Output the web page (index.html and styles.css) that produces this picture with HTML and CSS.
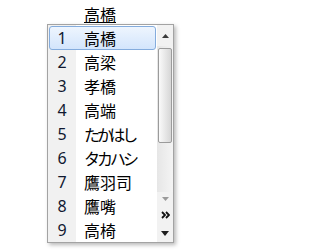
FILE: index.html
```html
<!DOCTYPE html>
<html lang="ja">
<head>
<meta charset="utf-8">
<link rel="stylesheet" href="styles.css">
</head>
<body>
<div class="page">
  <div class="comp"><span class="comp-text">高橋</span></div>
  <div class="cand">
    <ul class="list">
      <li class="row sel"><span class="num">1</span><span class="word">高橋</span></li>
      <li class="row"><span class="num">2</span><span class="word">高梁</span></li>
      <li class="row"><span class="num">3</span><span class="word">孝橋</span></li>
      <li class="row"><span class="num">4</span><span class="word">高端</span></li>
      <li class="row"><span class="num">5</span><span class="word kana">たかはし</span></li>
      <li class="row"><span class="num">6</span><span class="word kana">タカハシ</span></li>
      <li class="row"><span class="num">7</span><span class="word">鷹羽司</span></li>
      <li class="row"><span class="num">8</span><span class="word">鷹嘴</span></li>
      <li class="row"><span class="num">9</span><span class="word">高椅</span></li>
    </ul>
    <div class="side">
      <div class="scroll">
        <div class="sbtn up"><svg width="7" height="4" viewBox="0 0 7 4"><polygon points="0,4 3.5,0 7,4" fill="#3a3a3a"/></svg></div>
        <div class="track">
          <div class="thumb"></div>
        </div>
        <div class="sbtn down"><svg width="7" height="4" viewBox="0 0 7 4"><polygon points="0,0 7,0 3.5,4" fill="#9a9a9a"/></svg></div>
      </div>
      <div class="ext">
        <svg width="9" height="8" viewBox="0 0 9 8"><polyline points="1,1 4,4 1,7" fill="none" stroke="#111" stroke-width="1.8"/><polyline points="5,1 8,4 5,7" fill="none" stroke="#111" stroke-width="1.8"/></svg>
      </div>
      <div class="more">
        <svg width="8" height="5" viewBox="0 0 8 5"><polygon points="0,0 8,0 4,5" fill="#1e1e1e"/></svg>
      </div>
    </div>
  </div>
</div>
</body>
</html>
```
FILE: styles.css
```css
html, body {
  margin: 0;
  padding: 0;
  background: #fff;
}
.page {
  width: 220px;
  height: 250px;
  padding-top: 6px;
  box-sizing: border-box;
  font-family: "Noto Sans CJK JP", "Noto Sans", sans-serif;
}
.comp {
  margin-left: 84px;
  height: 17px;
  display: flex;
  align-items: flex-start;
}
.comp-text {
  display: block;
  height: 16px;
  font-size: 16px;
  line-height: 16px;
  border-bottom: 1px solid #000;
  color: #000;
}
.cand {
  margin-top: 1px;
  margin-left: 47px;
  width: 127px;
  height: 219px;
  box-sizing: border-box;
  border: 1px solid #a3a3a3;
  display: flex;
  background: #fff;
  box-shadow: 2px 2px 4px rgba(0, 0, 0, 0.28);
}
.list {
  list-style: none;
  margin: 0;
  padding: 1px 0 0;
  width: 109px;
  background: linear-gradient(to right, #f1f1f1 0, #f1f1f1 28px, #fff 28px);
}
.row {
  height: 24px;
  box-sizing: border-box;
  margin: 0 1px;
  border: 1px solid transparent;
  border-radius: 3px;
  display: flex;
  align-items: center;
}
.row.sel {
  border-color: #84acdd;
  background: linear-gradient(#eef5fe, #d3e5fc);
}
.num {
  width: 24px;
  text-align: center;
  font-family: "Noto Sans", "Open Sans", sans-serif;
  font-size: 16px;
  line-height: 22px;
  color: #101830;
}
.word {
  margin-left: 10px;
  font-size: 16px;
  line-height: 22px;
  color: #000;
}
.word.kana {
  letter-spacing: -3px;
}
.side {
  width: 16px;
  display: flex;
  flex-direction: column;
  background: #f2f2f2;
}
.scroll {
  height: 181px;
  display: flex;
  flex-direction: column;
}
.sbtn {
  display: flex;
  align-items: center;
  justify-content: center;
}
.sbtn.up {
  height: 21px;
}
.sbtn.down {
  height: 14px;
}
.track {
  flex: 1;
  padding-top: 2px;
  background: linear-gradient(to right, #e6e6e6, #f4f4f4);
}
.thumb {
  margin: 0 1px;
  height: 95px;
  box-sizing: border-box;
  border: 1px solid #9b9b9b;
  border-radius: 2px;
  background: linear-gradient(to right, #fafafa, #e8e8e8 50%, #d6d6d6);
}
.ext {
  height: 18px;
  display: flex;
  align-items: center;
  justify-content: center;
}
.more {
  flex: 1;
  display: flex;
  align-items: center;
  justify-content: center;
}
```
